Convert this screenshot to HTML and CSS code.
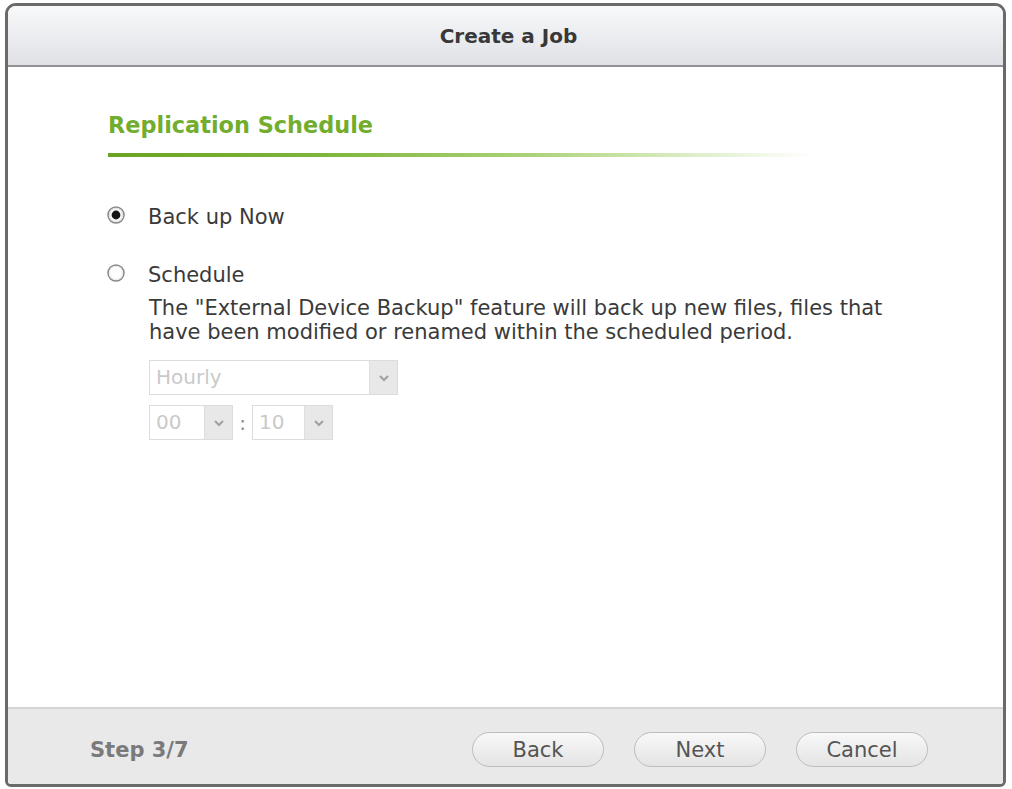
FILE: index.html
```html
<!DOCTYPE html>
<html lang="en">
<head>
<meta charset="utf-8">
<title>Create a Job</title>
<link rel="stylesheet" href="styles.css">
</head>
<body>
<div class="window">
  <header class="win-header">
    <h1 class="win-title">Create a Job</h1>
  </header>
  <main class="win-body">
    <h2 class="section-title">Replication Schedule</h2>
    <div class="section-rule"></div>

    <div class="option option-first">
      <svg class="radio" width="18" height="18" viewBox="0 0 18 18">
        <circle cx="9" cy="9" r="8" fill="#fbfbfb" stroke="#8a8a8a" stroke-width="1.5"/>
        <circle cx="9" cy="9" r="6.5" fill="none" stroke="#dedede" stroke-width="1"/>
        <circle cx="9" cy="9" r="4.4" fill="#151515"/>
      </svg>
      <span class="option-label">Back up Now</span>
    </div>

    <div class="option option-second">
      <svg class="radio" width="18" height="18" viewBox="0 0 18 18">
        <circle cx="9" cy="9" r="8" fill="#fdfdfd" stroke="#8a8a8a" stroke-width="1.5"/>
        <circle cx="9" cy="9" r="6.5" fill="none" stroke="#ebebeb" stroke-width="1"/>
      </svg>
      <span class="option-label">Schedule</span>
    </div>

    <div class="schedule">
      <p class="desc">The "External Device Backup" feature will back up new files, files that<br>have been modified or renamed within the scheduled period.</p>

      <div class="select select-wide">
        <span class="select-value">Hourly</span>
        <span class="select-arrow">
          <svg width="12" height="8" viewBox="0 0 12 8"><polyline points="2,2 6,6 10,2" fill="none" stroke="#a0a0a0" stroke-width="2"/></svg>
        </span>
      </div>

      <div class="time-row">
        <div class="select select-small">
          <span class="select-value">00</span>
          <span class="select-arrow">
            <svg width="12" height="8" viewBox="0 0 12 8"><polyline points="2,2 6,6 10,2" fill="none" stroke="#a0a0a0" stroke-width="2"/></svg>
          </span>
        </div>
        <span class="colon">:</span>
        <div class="select select-small select-minutes">
          <span class="select-value">10</span>
          <span class="select-arrow">
            <svg width="12" height="8" viewBox="0 0 12 8"><polyline points="2,2 6,6 10,2" fill="none" stroke="#a0a0a0" stroke-width="2"/></svg>
          </span>
        </div>
      </div>
    </div>
  </main>
  <footer class="win-footer">
    <span class="step">Step 3/7</span>
    <div class="buttons">
      <button class="btn">Back</button>
      <button class="btn">Next</button>
      <button class="btn">Cancel</button>
    </div>
  </footer>
</div>
</body>
</html>
```

FILE: styles.css
```css
html, body {
  margin: 0;
  padding: 0;
  background: #ffffff;
}

body {
  font-family: "DejaVu Sans", Verdana, sans-serif;
  color: #3c3c3c;
}

.window {
  box-sizing: border-box;
  margin: 3px 6px 0 5px;
  height: 784px;
  border: 3px solid #6a6a6a;
  border-radius: 11px 11px 6px 6px;
  display: flex;
  flex-direction: column;
  overflow: hidden;
  background: #ffffff;
}

.win-header {
  flex-shrink: 0;
  box-sizing: border-box;
  height: 61px;
  border-bottom: 2px solid #8e9094;
  background: linear-gradient(#f8f9fa, #dfe1e6);
  display: flex;
  align-items: center;
  justify-content: center;
}

.win-title {
  margin: 0;
  font-size: 20px;
  font-weight: bold;
  color: #383838;
  line-height: 24px;
  padding-left: 6px;
}

.win-body {
  flex: 1;
  padding: 45px 0 0 100px;
}

.section-title {
  margin: 0;
  font-size: 22.4px;
  line-height: 26px;
  font-weight: bold;
  color: #72ad2e;
}

.section-rule {
  margin-top: 15px;
  width: 705px;
  height: 4px;
  background: linear-gradient(to right, #69a325 0%, #7db63a 30%, #acd27a 60%, rgba(215, 235, 190, 0.8) 84%, rgba(255, 255, 255, 0) 100%);
}

.option {
  display: flex;
  align-items: flex-start;
  font-size: 21px;
  line-height: 24px;
}

.option-first {
  margin-top: 48px;
}

.option-second {
  margin-top: 34px;
}

.radio {
  flex-shrink: 0;
  margin: 1px 23px 0 -1px;
}

.option-label {
  color: #3a3a3a;
}

.schedule {
  margin-left: 41px;
}

.desc {
  margin: 9px 0 0 0;
  font-size: 21px;
  line-height: 24px;
  white-space: nowrap;
  color: #3a3a3a;
}

.select {
  box-sizing: border-box;
  height: 35px;
  display: flex;
  border: 1px solid #dcdcdc;
  background: #ffffff;
}

.select-wide {
  width: 249px;
  margin-top: 16px;
}

.select-small {
  width: 84px;
}

.select-minutes {
  width: 81px;
}

.select-value {
  flex: 1;
  padding-left: 6px;
  font-size: 20px;
  line-height: 33px;
  color: #c9c9c9;
}

.select-arrow {
  width: 27px;
  background: #e8e8e8;
  border-left: 1px solid #dedede;
  display: flex;
  align-items: center;
  justify-content: center;
}

.time-row {
  margin-top: 10px;
  display: flex;
  align-items: center;
}

.colon {
  width: 19px;
  text-align: center;
  font-size: 20px;
  color: #8c8c8c;
}

.win-footer {
  flex-shrink: 0;
  box-sizing: border-box;
  height: 77px;
  border-top: 2px solid #d4d4d4;
  background: #e9e9e9;
  display: flex;
  align-items: center;
  justify-content: space-between;
  padding: 6px 75px 0 82px;
}

.step {
  font-size: 21px;
  font-weight: bold;
  color: #7a7a7a;
}

.buttons {
  display: flex;
  gap: 30px;
}

.btn {
  box-sizing: border-box;
  width: 132px;
  height: 35px;
  border: 1px solid #bdbdbd;
  border-radius: 18px;
  background: linear-gradient(#f8f8f8, #e4e4e4);
  font-family: "DejaVu Sans", Verdana, sans-serif;
  font-size: 21px;
  color: #555555;
  padding: 0;
}
```
